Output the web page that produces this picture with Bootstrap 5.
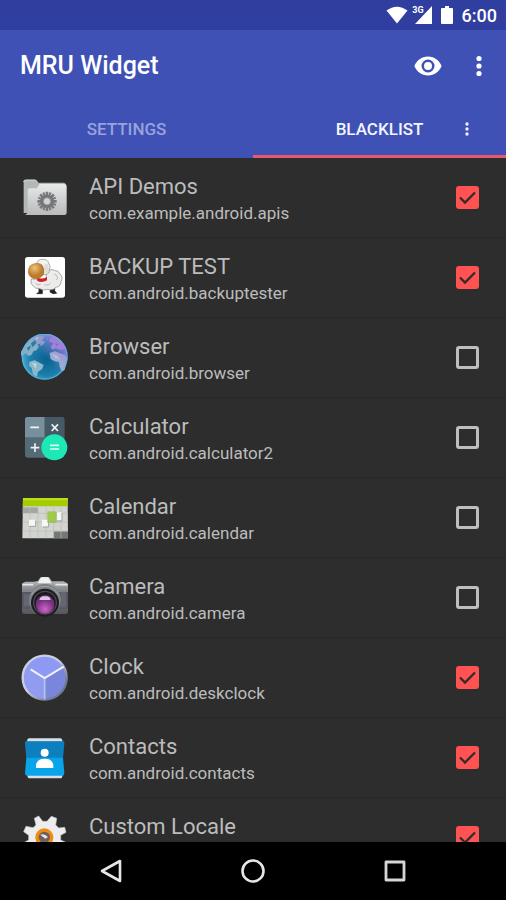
<!DOCTYPE html>
<html lang="en">
<head>
<meta charset="utf-8">
<meta name="viewport" content="width=device-width, initial-scale=1">
<title>MRU Widget</title>
<link rel="stylesheet" href="https://cdn.jsdelivr.net/npm/bootstrap@5.3.0/dist/css/bootstrap.min.css">
<style>
  body { font-family: Roboto, "Liberation Sans", sans-serif; background: #2d2d2d; color: #bcbcbc; }
  svg { display: block; flex: none; }
  button { color: inherit; }
  .status-bar { background: #303f9f; height: 30px; padding: 0 9px; color: #fff; gap: 9px; font-size: 18px; font-weight: 500; }
  .net-label { font-size: 9px; font-weight: 700; }
  .app-head { background: #3f51b5; color: #fff; }
  .app-bar { height: 70px; padding: 2px 12px 0 20px; }
  .app-title { font-size: 25px; line-height: 32px; font-weight: 500; }
  .app-actions { gap: 22px; }
  .tab-row { height: 58px; }
  .tab-link { font-size: 17px; font-weight: 500; line-height: 20px; padding-top: 2px; border-bottom: 3px solid transparent; color: #98a3dc; }
  .tab-link.active { color: #f3f5ff; border-color: #e9596c; }
  .tab-menu { right: 32px; }
  .app-row { height: 80px; padding: 0 27px 0 21px; border-bottom: 1px solid #282828; gap: 20px; cursor: pointer; }
  .app-text { padding-top: 3px; }
  .app-name { font-size: 22px; line-height: 28px; }
  .app-package { font-size: 17px; line-height: 24px; min-height: 24px; }
  .form-check-input.app-check { width: 23px; height: 23px; border: 3px solid #bebebe; border-radius: 3px; background-color: transparent; }
  .form-check-input.app-check:checked { border-width: 0; background-color: #ff5252; background-size: 100% 100%;
    background-image: url("data:image/svg+xml,%3Csvg xmlns='http://www.w3.org/2000/svg' viewBox='0 0 23 23'%3E%3Cpath d='M4 11.5l5 5L19 6.5' fill='none' stroke='%232d2d2d' stroke-width='2.3'/%3E%3C/svg%3E"); }
  .system-nav { background: #000; color: #e6e6e6; height: 58px; padding: 0 40px; }
</style>
<script src="https://cdn.jsdelivr.net/npm/bootstrap@5.3.0/dist/js/bootstrap.bundle.min.js"></script>
</head>
<body>
<div class="d-flex flex-column vh-100 overflow-hidden">
  <div class="status-bar d-flex align-items-center justify-content-end flex-shrink-0">
    <div class="d-flex align-items-start">
      <svg class="me-1" width="22" height="18" viewBox="0 0 23 18" fill="#fff"><path d="M11.5 18L0.5 4.3Q11.5-3.8 22.5 4.3Z"/></svg>
      <span class="net-label lh-1">3G</span>
      <svg width="8" height="18" viewBox="0 0 8 18" fill="#fff" overflow="visible"><path d="M8 0V18H-9Z"/></svg>
    </div>
    <svg width="12" height="18" viewBox="0 0 12 18" fill="#fff"><path d="M4 0h4v2h3q1 0 1 1v14q0 1-1 1H1q-1 0-1-1V3q0-1 1-1h3z"/></svg>
    <span>6:00</span>
  </div>

  <header class="app-head flex-shrink-0">
    <div class="app-bar d-flex align-items-center justify-content-between">
      <h1 class="app-title m-0">MRU Widget</h1>
      <div class="app-actions d-flex align-items-center">
        <button class="btn border-0 p-0" type="button" aria-label="Preview">
          <svg width="28" height="20" viewBox="0 0 28 20"><path fill="#fff" fill-rule="evenodd" d="M14 0.5C7.8 .5 2.5 4.4.4 10c2.1 5.6 7.400 9.500 13.600 9.500S25.500 15.600 27.600 10C25.500 4.400 20.200.5 14 .5zm0 16a6.500 6.500 0 1 1 0-13 6.500 6.500 0 0 1 0 13zM14 6a4 4 0 1 0 0 8 4 4 0 0 0 0-8z"/></svg>
        </button>
        <button class="btn border-0 p-0" type="button" aria-label="More options">
          <svg width="30" height="24" viewBox="0 0 30 24" fill="#fff"><circle cx="15" cy="4.500" r="2.600"/><circle cx="15" cy="12" r="2.600"/><circle cx="15" cy="19.500" r="2.600"/></svg>
        </button>
      </div>
    </div>
    <nav class="tab-row d-flex position-relative" aria-label="Sections">
      <a class="tab-link col-6 d-flex align-items-center justify-content-center text-decoration-none" href="#settings">SETTINGS</a>
      <a class="tab-link active col-6 d-flex align-items-center justify-content-center text-decoration-none" href="#blacklist">BLACKLIST</a>
      <button class="tab-menu btn border-0 p-0 position-absolute top-50 translate-middle-y" type="button" aria-label="Blacklist options">
        <svg width="14" height="16" viewBox="0 0 14 16" fill="#eef0ff"><circle cx="7" cy="3" r="1.700"/><circle cx="7" cy="8" r="1.700"/><circle cx="7" cy="13" r="1.700"/></svg>
      </button>
    </nav>
  </header>

  <main id="blacklist" class="flex-fill overflow-hidden">
    <label class="app-row d-flex align-items-center" for="app1">
      <svg width="48" height="48" viewBox="0 0 144 144">
        <defs><linearGradient id="fold" x2="0" y2="1"><stop stop-color="#e8e9e9"/><stop offset="1" stop-color="#b8babb"/></linearGradient></defs>
        <path d="M8 24q0-6 6-6h28q5 0 8 8h78q6 0 6 7v84H8z" fill="#b4b7b7"/>
        <path d="M8 24q0-6 6-6h28q5 0 8 8" fill="none" stroke="#dcdede" stroke-width="3"/>
        <path d="M20 49q0-6 6-6h21l9-13h74q7 0 7 7v79q0 7-7 7H12q6-1 8-8z" fill="url(#fold)"/>
        <g stroke="#777b7d" stroke-width="8"><path d="M78 53v58M49 82h58M57.500 61.500l41 41M98.500 61.500l-41 41"/><path d="M67 55.500l22 53M51.500 93l53-22M51.500 71l53 22M67 108.500l22-53" stroke-width="6"/></g>
        <circle cx="78" cy="82" r="20" fill="#727678"/><circle cx="78" cy="82" r="11" fill="#d1d3d4" stroke="#929597" stroke-width="3"/>
      </svg>
      <span class="app-text flex-grow-1"><span class="app-name d-block">API Demos</span><span class="app-package d-block">com.example.android.apis</span></span>
      <input class="form-check-input app-check m-0 flex-shrink-0" type="checkbox" id="app1" checked>
    </label>
    <label class="app-row d-flex align-items-center" for="app2">
      <svg width="48" height="48" viewBox="0 0 144 144">
        <defs><radialGradient id="face" cx=".4" cy=".3"><stop stop-color="#efc27a"/><stop offset="1" stop-color="#bd7a2d"/></radialGradient></defs>
        <rect x="12" y="9" width="120" height="122" rx="8" fill="#fff"/>
        <path d="M53 94l1 20-7 5h17V96M89 98l-2 16 9 5 11-1-6-8V95" fill="#26201d" stroke="#26201d" stroke-width="2"/>
        <path d="M31 75q-4 14 5 20 6 10 20 9 12 7 24 2 17 5 24-6 16-2 16-17 8-14-3-23-4-11-17-11-7-5-14 0-5-5-10-1V75z" fill="#ececea" stroke="#858585" stroke-width="2"/>
        <path d="M48 27q3-12 17-11 15-1 18 12 8 9 2 20 1 11-10 14H58z" fill="#f3f3f1" stroke="#858585" stroke-width="2"/>
        <path d="M99 60q15 5 8 18M70 92q12 5 19-5M44 88q8 8 15 2" fill="none" stroke="#bbb" stroke-width="3"/>
        <path d="M47 70q15 9 31-1v10q-15 9-29 2z" fill="#d51f24"/>
        <path d="M28 35q17-12 34-3 10 13 6 28-9 15-27 14-18-4-19-20 0-13 6-19z" fill="url(#face)" stroke="#a87535" stroke-width="2"/>
        <ellipse cx="76" cy="44" rx="7" ry="15" fill="#deddda"/>
      </svg>
      <span class="app-text flex-grow-1"><span class="app-name d-block">BACKUP TEST</span><span class="app-package d-block">com.android.backuptester</span></span>
      <input class="form-check-input app-check m-0 flex-shrink-0" type="checkbox" id="app2" checked>
    </label>
    <label class="app-row d-flex align-items-center" for="app3">
      <svg width="48" height="48" viewBox="0 0 144 144">
        <defs><radialGradient id="sea" cx=".55" cy=".55" r=".55"><stop stop-color="#08618e"/><stop offset=".65" stop-color="#1f7dab"/><stop offset="1" stop-color="#4ba9d2"/></radialGradient>
        <linearGradient id="dusk" x1=".5" y1=".5" x2=".9" y2=".1"><stop stop-color="#b26de0" stop-opacity="0"/><stop offset="1" stop-color="#b26de0" stop-opacity=".8"/></linearGradient></defs>
        <circle cx="71" cy="68" r="69" fill="url(#sea)"/>
        <path d="M12 33Q28 10 52 5l18 2-7 13 10 3-8 10-11 4-7 12-10 3-5 10-9 4-9-8-10 6-12 3z" fill="#84afc5"/>
        <path d="M25 83l16-4 12 6 15 8-5 13-12 7-4 16-11-8-4-18-8-8z" fill="#8ab7ca"/>
        <path d="M87 12l14-5 20 15 12 20-12 6-17-5-10 4-5-9 9-10-13-5z" fill="#8a98cf"/>
        <path d="M86 57l16-5 15 6 15 4 7 12-8 33-8 6-7-15-2-14-13-2-12-7z" fill="#93bbcf"/>
        <path d="M30 28l12-10 5 9-13 13zM49 32l10-4-3 13zM17 42l14-8-8 17zM103 27l9 4-6 6z" fill="#2c7ba7"/>
        <path d="M33 86l14 3-3 15zM94 60l15 5 9 13-15-6zM42 12l12-3-7 9z" fill="#c5d6db"/>
        <circle cx="71" cy="68" r="69" fill="url(#dusk)"/><circle cx="71" cy="68" r="67" fill="none" stroke="#58bdea" stroke-opacity=".6" stroke-width="4"/>
      </svg>
      <span class="app-text flex-grow-1"><span class="app-name d-block">Browser</span><span class="app-package d-block">com.android.browser</span></span>
      <input class="form-check-input app-check m-0 flex-shrink-0" type="checkbox" id="app3">
    </label>
    <label class="app-row d-flex align-items-center" for="app4">
      <svg width="48" height="48" viewBox="0 0 144 144">
        <rect x="12" y="9" width="118" height="122" rx="8" fill="#546a75"/>
        <path d="M20 9h51v61H12V17q0-8 8-8z" fill="#78909c"/><path d="M71 9h51q8 0 8 8v53H71z" fill="#455a64"/>
        <path d="M28 40h26M29 101h26M42 88v26M92 31l19 20M111 31L92 51" stroke="#eef2f3" stroke-width="5"/>
        <circle cx="100" cy="100" r="39" fill="#1de9b6"/><path d="M87 94h27M87 105h27" stroke="#e6fff8" stroke-width="5"/>
      </svg>
      <span class="app-text flex-grow-1"><span class="app-name d-block">Calculator</span><span class="app-package d-block">com.android.calculator2</span></span>
      <input class="form-check-input app-check m-0 flex-shrink-0" type="checkbox" id="app4">
    </label>
    <label class="app-row d-flex align-items-center" for="app5">
      <svg width="48" height="48" viewBox="0 0 144 144">
        <path d="M6 12h134l1 121H4z" fill="#d2d4d0"/><path d="M6 12h134v25H5z" fill="#a4cc00"/><path d="M6 12h134v7H6z" fill="#bce019"/>
        <path d="M5 40h46v17H5z" fill="#a4a6a3"/><path d="M98 112h43v21H98z" fill="#747775"/>
        <path d="M5 58h136M5 85h136M5 111h136M27 39v94M51 39v94M75 39v94M98 39v94M120 39v94" stroke="#b9bbb8" stroke-width="2"/>
        <path d="M24 77h19v19H24zM63 77h19v21H63zM107 55h15v24h-15z" fill="#f7f8f6"/><path d="M25 97h19V80M65 99h18V82M108 81h15V57" fill="none" stroke="#a1a4a0" stroke-width="3"/>
        <path d="M79 52h26v32H79z" fill="#9fc94a"/><path d="M79 85h27V54" fill="none" stroke="#8fae58" stroke-width="2"/>
      </svg>
      <span class="app-text flex-grow-1"><span class="app-name d-block">Calendar</span><span class="app-package d-block">com.android.calendar</span></span>
      <input class="form-check-input app-check m-0 flex-shrink-0" type="checkbox" id="app5">
    </label>
    <label class="app-row d-flex align-items-center" for="app6">
      <svg width="48" height="48" viewBox="0 0 144 144">
        <defs><linearGradient id="body6" x2="0" y2="1"><stop stop-color="#c6c8cb"/><stop offset=".35" stop-color="#85888c"/><stop offset="1" stop-color="#55575c"/></linearGradient>
        <radialGradient id="lens" cy=".75"><stop stop-color="#ce65c8"/><stop offset="1" stop-color="#762d80"/></radialGradient></defs>
        <path d="M4 28l9-5h25l13-2 6-9q2-3 6-3h17q4 0 6 4l6 9h35l11 5q3 2 3 8v77q0 8-8 8H11q-8 0-8-8V35q0-5 1-7z" fill="url(#body6)"/>
        <path d="M50 28l9-15q2-3 6-3h13q4 0 6 4l8 14z" fill="#f0f0f0"/>
        <path d="M3 54h39v51H3zM105 54h36v51h-36z" fill="#565863"/><path d="M8 61h21v36H8zM119 53h16v47h-16z" fill="#666672"/>
        <path d="M4 32h33M103 32h37" stroke="#e5e5e5" stroke-width="5"/>
        <circle cx="72" cy="78" r="48" fill="#7d8084"/><circle cx="72" cy="86" r="42" fill="#1c1b1f"/><circle cx="72" cy="86" r="34" fill="none" stroke="#4b4850" stroke-width="4"/>
        <circle cx="72" cy="91" r="28" fill="url(#lens)"/><path d="M55 78q2-9 10-11h15q8 2 9 11z" fill="#d7c7dd"/><path d="M32 62q11-24 40-25 29 1 40 25" fill="none" stroke="#a1a2a5" stroke-width="3"/>
      </svg>
      <span class="app-text flex-grow-1"><span class="app-name d-block">Camera</span><span class="app-package d-block">com.android.camera</span></span>
      <input class="form-check-input app-check m-0 flex-shrink-0" type="checkbox" id="app6">
    </label>
    <label class="app-row d-flex align-items-center" for="app7">
      <svg width="48" height="48" viewBox="0 0 144 144">
        <defs><linearGradient id="rim" x1="0" y1="0" x2="1" y2="1"><stop offset=".45" stop-color="#c9cfe1"/><stop offset=".8" stop-color="#6d7b91"/></linearGradient></defs>
        <circle cx="71" cy="71" r="66" fill="#8e99f3"/>
        <path d="M71 72l56-33q10 17 10 33-2 61-64 65z" fill="#7a86dc"/><path d="M71 72v64Q8 132 8 72q0-18 14-38z" fill="#919bf0"/>
        <circle cx="71" cy="71" r="66" fill="none" stroke="url(#rim)" stroke-width="7"/>
        <path d="M71 72v64" stroke="#bac1e9" stroke-width="5"/><path d="M29 46l42 26 57-34" fill="none" stroke="#f0f2fa" stroke-width="6"/>
      </svg>
      <span class="app-text flex-grow-1"><span class="app-name d-block">Clock</span><span class="app-package d-block">com.android.deskclock</span></span>
      <input class="form-check-input app-check m-0 flex-shrink-0" type="checkbox" id="app7" checked>
    </label>
    <label class="app-row d-flex align-items-center" for="app8">
      <svg width="48" height="48" viewBox="0 0 144 144">
        <path d="M24 13h94q5 0 7 10H18q1-10 6-10zM18 122h107q-1 11-7 11H26q-6 0-8-11z" fill="#d8dfe5"/>
        <path d="M15 22h112q4 0 3 7l-4 43H16l-4-43q-1-7 3-7z" fill="#0c7fbf"/><path d="M16 71h110l4 46q0 8-5 8H18q-6 0-6-8z" fill="#08a5ea"/>
        <circle cx="71" cy="56" r="12" fill="#fff"/><path d="M45 102V92q4-18 26-18t26 18v10z" fill="#fff"/>
      </svg>
      <span class="app-text flex-grow-1"><span class="app-name d-block">Contacts</span><span class="app-package d-block">com.android.contacts</span></span>
      <input class="form-check-input app-check m-0 flex-shrink-0" type="checkbox" id="app8" checked>
    </label>
    <label class="app-row d-flex align-items-center" for="app9">
      <svg width="48" height="48" viewBox="0 0 144 144">
        <path d="M40 13l13-7 12 16h13l13-15 16 6-3 20 9 9 18-2 4 15-16 9v14l17 8-5 17-19-1-10 13 3 18-16 6-12-15H65l-13 15-16-8 4-18-9-11-19 1-5-16 16-9V64L8 53l7-16 21 4 9-8z" fill="#ededed" stroke="#c7c7c7" stroke-width="2"/>
        <circle cx="70" cy="70" r="22" fill="#6b625b" stroke="#f28a13" stroke-width="10"/><path d="M58 62q12-5 23 7l-8 5z" fill="#e6e6e6"/>
      </svg>
      <span class="app-text flex-grow-1"><span class="app-name d-block">Custom Locale</span><span class="app-package d-block"></span></span>
      <input class="form-check-input app-check m-0 flex-shrink-0" type="checkbox" id="app9" checked>
    </label>
  </main>

  <nav class="system-nav d-flex align-items-stretch flex-shrink-0" aria-label="System">
    <button class="btn border-0 p-0 col d-flex align-items-center justify-content-center" type="button" aria-label="Back">
      <svg width="24" height="26" viewBox="0 0 24 26" fill="none" stroke="#e6e6e6" stroke-width="2.600" stroke-linejoin="round"><path d="M21 3v20L3 13z"/></svg>
    </button>
    <button class="btn border-0 p-0 col d-flex align-items-center justify-content-center" type="button" aria-label="Home">
      <svg width="26" height="26" viewBox="0 0 26 26" fill="none" stroke="#e6e6e6" stroke-width="2.600"><circle cx="13" cy="13" r="10.500"/></svg>
    </button>
    <button class="btn border-0 p-0 col d-flex align-items-center justify-content-center" type="button" aria-label="Recent apps">
      <svg width="24" height="24" viewBox="0 0 24 24" fill="none" stroke="#d6d6d6" stroke-width="2.800" stroke-linejoin="round"><path d="M3 3h18v18H3z"/></svg>
    </button>
  </nav>
</div>
</body>
</html>
